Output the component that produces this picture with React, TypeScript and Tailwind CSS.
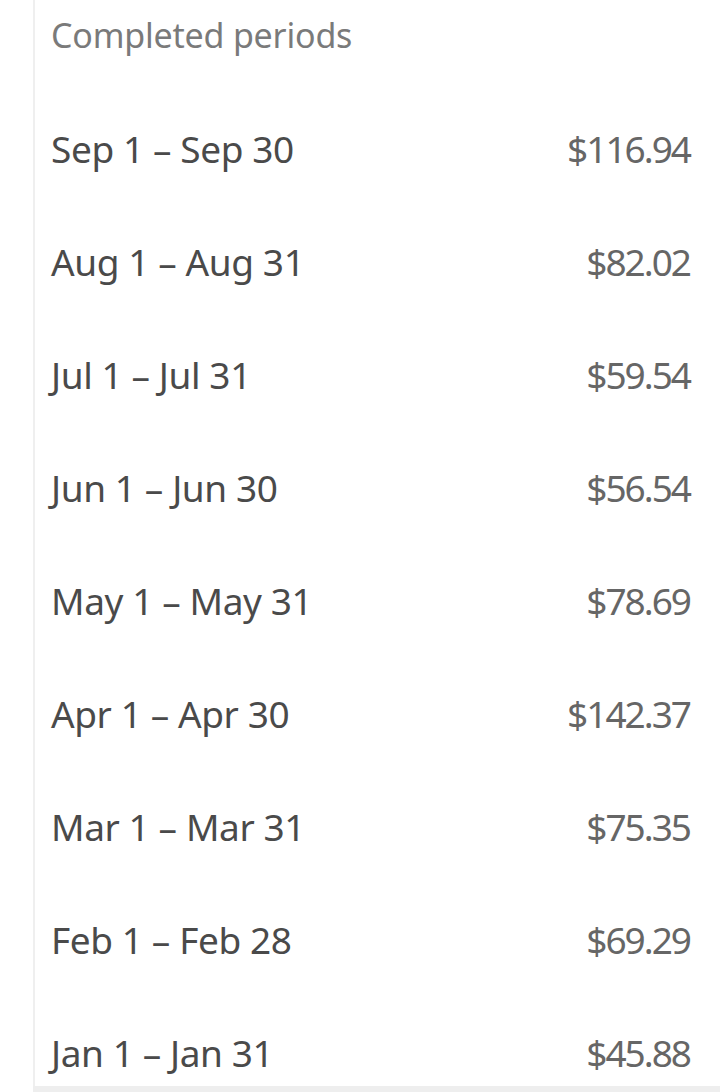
const periods = [
  { range: 'Sep 1 – Sep 30', amount: '$116.94' },
  { range: 'Aug 1 – Aug 31', amount: '$82.02' },
  { range: 'Jul 1 – Jul 31', amount: '$59.54' },
  { range: 'Jun 1 – Jun 30', amount: '$56.54' },
  { range: 'May 1 – May 31', amount: '$78.69' },
  { range: 'Apr 1 – Apr 30', amount: '$142.37' },
  { range: 'Mar 1 – Mar 31', amount: '$75.35' },
  { range: 'Feb 1 – Feb 28', amount: '$69.29' },
  { range: 'Jan 1 – Jan 31', amount: '$45.88' },
];

export default function App() {
  return (
    <div className="flex flex-col w-[720px] h-[1092px] bg-white font-['Noto_Sans',sans-serif] overflow-hidden">
      <div className="flex h-[1086px] overflow-hidden">
        <div className="w-[33px] shrink-0" />
        <div className="flex-1 flex flex-col border-l-2 border-[#efefef] pl-[16px] pr-[30px]">
          <div className="h-[92px] shrink-0 pt-[11px] leading-[48px] text-[34px] text-[#7a7a7a] tracking-[-0.2px]">Completed periods</div>
          {periods.map((p) => (
            <div key={p.range} className="h-[113px] shrink-0 flex items-center justify-between text-[37px]">
              <span className="text-[#4a4a4a] tracking-[-0.4px]">{p.range}</span>
              <span className="text-[#666666] tracking-[-2px]">{p.amount}</span>
            </div>
          ))}
        </div>
      </div>
      <div className="flex h-[6px]">
        <div className="w-[33px]" />
        <div className="flex-1 bg-[#eeeeee]" />
      </div>
    </div>
  );
}
